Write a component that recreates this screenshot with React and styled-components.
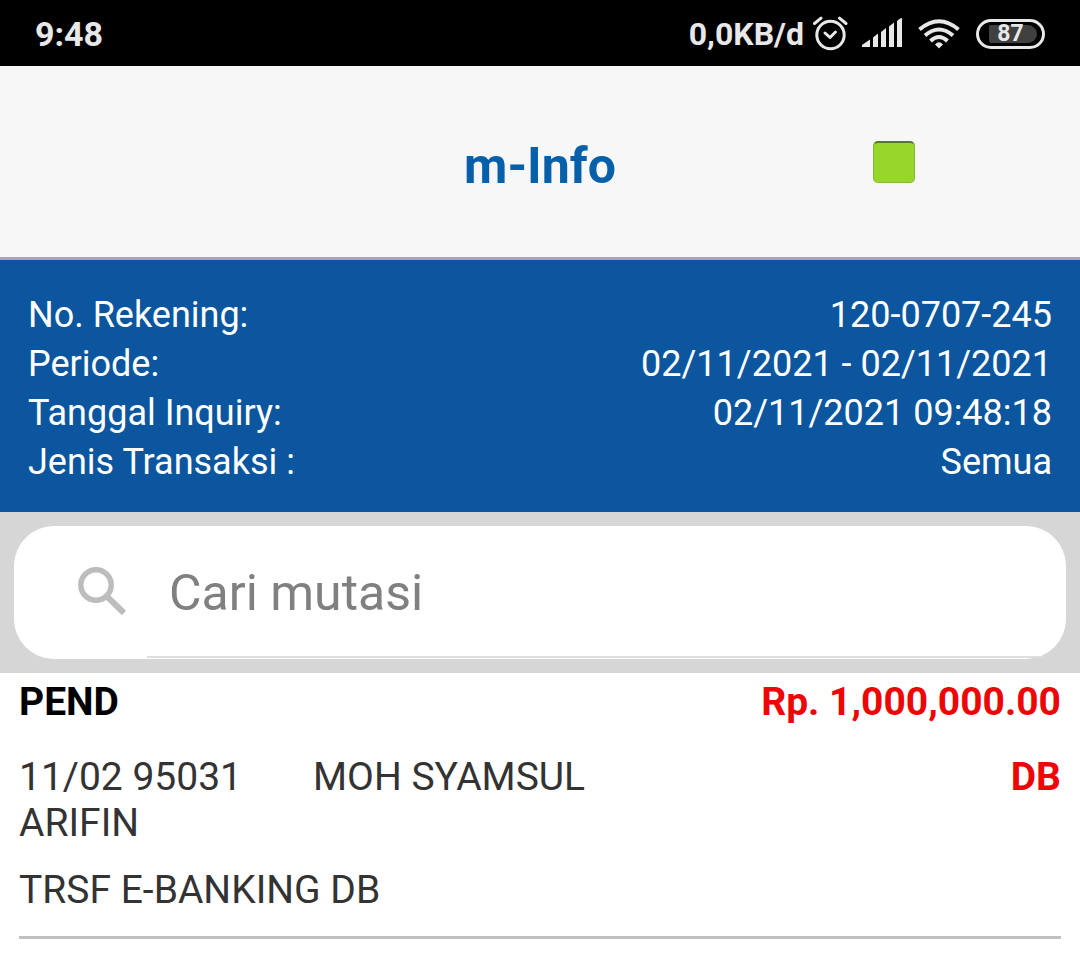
import React from "react";
import styled, { createGlobalStyle } from "styled-components";

const GlobalStyle = createGlobalStyle`
  * { box-sizing: border-box; }
  body {
    margin: 0;
    background: #fff;
    font-family: Roboto, "Liberation Sans", sans-serif;
  }
`;

const StatusBar = styled.div`
  display: flex;
  align-items: center;
  justify-content: space-between;
  height: 66px;
  padding: 2px 35px 0;
  background: #000;
  color: #e8e8e8;
`;

const Clock = styled.time`
  font-size: 34px;
  font-weight: 700;
  line-height: 40px;
`;

const StatusIcons = styled.div`
  display: flex;
  align-items: center;
  svg { display: block; }
`;

const NetSpeed = styled.span`
  margin-right: 8px;
  font-size: 32px;
  font-weight: 700;
  line-height: 40px;
`;

const Spacer = styled.span`
  width: ${(p) => p.$width}px;
`;

const Battery = styled.span`
  display: flex;
  align-items: center;
  justify-content: flex-end;
  width: 69px;
  height: 30px;
  margin-left: 16px;
  padding-right: 5px;
  border: 3px solid #e8e8e8;
  border-radius: 15px;
`;

const BatteryLevel = styled.span`
  width: 48px;
  height: 18px;
  padding-right: 5px;
  border-radius: 2px 9px 9px 2px;
  background: #404040;
  font-size: 23px;
  font-weight: 700;
  line-height: 18px;
  text-align: center;
`;

const Header = styled.header`
  display: grid;
  grid-template-columns: 1fr auto 1fr;
  align-items: center;
  height: 194px;
  border-bottom: 3px solid #a2a8ae;
  background: #f7f7f7;
`;

const Title = styled.h1`
  grid-column: 2;
  margin: 0;
  padding-top: 8px;
  color: #0560a9;
  font-size: 50px;
  font-weight: 700;
  line-height: 60px;
`;

const Connection = styled.span`
  justify-self: end;
  width: 42px;
  height: 42px;
  margin-right: 165px;
  border: 1px solid #86b832;
  border-top: 2px solid #567a1c;
  border-radius: 5px;
  background: #97d62b;
`;

const Summary = styled.dl`
  margin: 0;
  padding: 31px 28px 25px;
  background: #0b569f;
  color: #fff;
  font-size: 36px;
  line-height: 49px;
`;

const SummaryRow = styled.div`
  display: flex;
  justify-content: space-between;
  dd { margin: 0; }
`;

const SearchArea = styled.form`
  padding: 14px;
  background: #d6d6d6;
`;

const SearchBox = styled.label`
  display: flex;
  align-items: center;
  height: 133px;
  padding: 0 22px 0 62px;
  border-radius: 40px;
  background: #fff;
  svg {
    flex: none;
    margin: 0 19px 4px 0;
  }
`;

const SearchInput = styled.input`
  flex: 1;
  min-width: 0;
  height: 131px;
  padding: 2px 22px 0;
  border: 0;
  border-bottom: 2px solid #dedede;
  outline: 0;
  background: transparent;
  color: #333;
  font: 400 50px Roboto, "Liberation Sans", sans-serif;
  &::placeholder { color: #808080; opacity: 1; }
`;

const Transaction = styled.article`
  margin: 0 19px;
  padding: 6px 0 23px;
  border-bottom: 3px solid #bfbfbf;
  color: #333;
  font-size: 39px;
  line-height: 46px;
`;

const TransactionRow = styled.div`
  display: grid;
  grid-template-columns: 3fr 2fr;
  margin-bottom: ${(p) => p.$gap}px;
`;

const Status = styled.strong`
  color: #000;
`;

const Debit = styled.strong`
  color: #ec0606;
  text-align: right;
`;

const Description = styled.span`
  white-space: pre-wrap;
  tab-size: 294px;
`;

const AlarmIcon = () => (
  <svg width="36" height="36" viewBox="0 0 36 36" fill="none" stroke="#e8e8e8" strokeWidth="3" strokeLinecap="round" strokeLinejoin="round" aria-label="Alarm">
    <circle cx="18.500" cy="19" r="13.700" />
    <path d="M13 17l5 4.500L23.500 16" />
    <path d="M2.500 7.500L9 2.200M27.500 2.200l6.500 5.300" />
  </svg>
);

const SignalIcon = () => (
  <svg width="41" height="32" viewBox="-1 -1 41 32" fill="#e8e8e8" aria-label="Signal">
    <path d="M-1 26L7 20.500V28H-1zM10 18.500l5-4V28h-5zM18 13l5-4V28h-5zM26 7.500l5-4V28h-5zM34 2.500Q35 0 39 -1V28h-5z" />
  </svg>
);

const WifiIcon = () => (
  <svg width="42" height="30" viewBox="0 0 42 30" fill="none" stroke="#e8e8e8" strokeWidth="4" aria-label="Wi-Fi">
    <path d="M1.500 10.500Q21-6 40.500 10.500" />
    <path d="M7 16.500Q21 4.500 35 16.500" />
    <path d="M12.500 22Q21 14 29.500 22" />
    <path d="M17 25.500Q21 21 25 25.500L21 29.500z" fill="#e8e8e8" stroke="none" />
  </svg>
);

const SearchIcon = () => (
  <svg width="52" height="52" viewBox="0 0 52 52" fill="none" stroke="#bdbdbd" aria-hidden="true">
    <circle cx="20" cy="20" r="15.200" strokeWidth="5.500" />
    <path d="M31 31.500L48 48" strokeWidth="6" />
  </svg>
);

const summary = [
  ["No. Rekening:", "120-0707-245"],
  ["Periode:", "02/11/2021 - 02/11/2021"],
  ["Tanggal Inquiry:", "02/11/2021 09:48:18"],
  ["Jenis Transaksi :", "Semua"],
];

export default function App() {
  return (
    <>
      <GlobalStyle />
      <StatusBar>
        <Clock>9:48</Clock>
        <StatusIcons>
          <NetSpeed>0,0KB/d</NetSpeed>
          <AlarmIcon />
          <Spacer $width={14} />
          <SignalIcon />
          <Spacer $width={15} />
          <WifiIcon />
          <Battery>
            <BatteryLevel>87</BatteryLevel>
          </Battery>
        </StatusIcons>
      </StatusBar>
      <Header>
        <Title>m-Info</Title>
        <Connection role="img" aria-label="Online" />
      </Header>
      <main>
        <Summary>
          {summary.map(([label, value]) => (
            <SummaryRow key={label}>
              <dt>{label}</dt>
              <dd>{value}</dd>
            </SummaryRow>
          ))}
        </Summary>
        <SearchArea>
          <SearchBox>
            <SearchIcon />
            <SearchInput type="text" placeholder="Cari mutasi" aria-label="Cari mutasi" />
          </SearchBox>
        </SearchArea>
        <Transaction>
          <TransactionRow $gap={29}>
            <Status>PEND</Status>
            <Debit>Rp. 1,000,000.00</Debit>
          </TransactionRow>
          <TransactionRow $gap={21}>
            <Description>{"11/02 95031\tMOH SYAMSUL ARIFIN"}</Description>
            <Debit>DB</Debit>
          </TransactionRow>
          <Description>TRSF E-BANKING DB</Description>
        </Transaction>
      </main>
    </>
  );
}
